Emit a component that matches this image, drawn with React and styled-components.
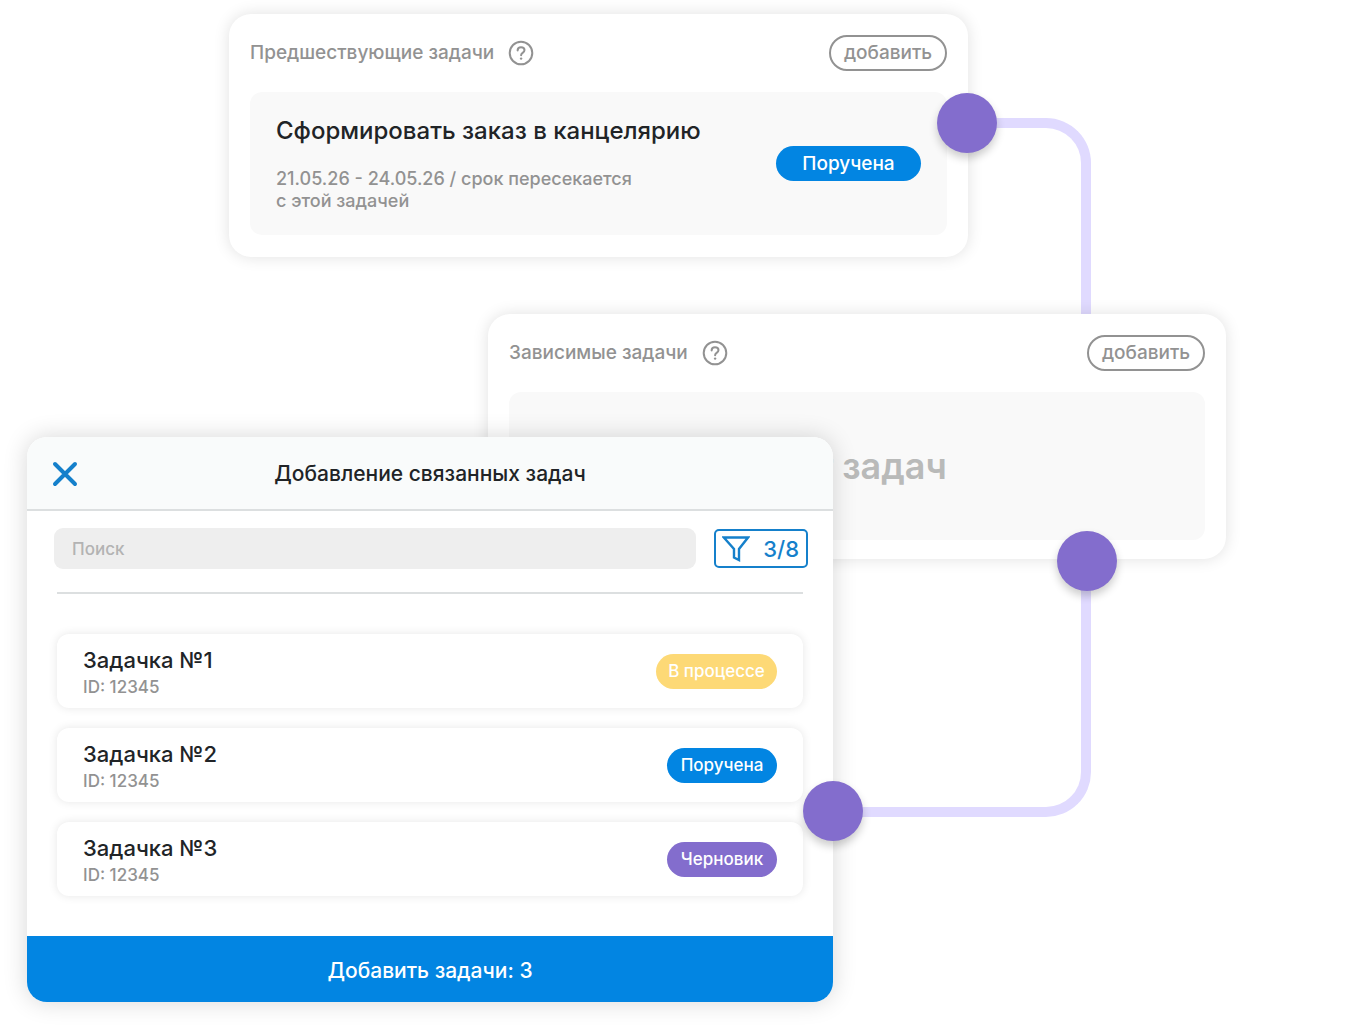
import React, {useState} from "react"
import styled, {createGlobalStyle} from "styled-components"

const colors = {
  blue: "#0285e2",
  outline: "#1580cb",
  purple: "#836dcd",
  lilac: "#e0daff",
  yellow: "#fdd976",
  text: "#212427",
  grey: "#929292",
  pale: "#f9f9f9",
  paleBlue: "#f9fbfb",
  line: "#dcdfe0",
}

const GlobalStyle = createGlobalStyle`
  body {
    margin: 0;
    background: #ffffff;
    font-family: Inter, "Noto Sans", sans-serif;
    font-weight: 500;
    color: ${colors.text};
  }
  * {
    box-sizing: border-box;
  }
  button, input {
    font: inherit;
  }
`

// columns and rows end where cards and connectors meet
const Board = styled.main`
  display: grid;
  grid-template-columns: 27fr 202fr 259fr 345fr 135fr 123fr 135fr 138fr;
  grid-template-rows: 14px minmax(243px, auto) 57px 123px 122px 258px 185px 28px;
`

const Card = styled.section`
  display: flex;
  flex-direction: column;
  gap: 22px;
  padding: 21px 21px 22px;
  border-radius: 22px;
  background: #ffffff;
  box-shadow: 0 0 16px rgba(0, 0, 0, 0.12);
  z-index: 1;
`

const PreviousCard = styled(Card)`
  grid-column: 3 / 6;
  grid-row: 2;
`

const DependentCard = styled(Card)`
  grid-column: 4 / 8;
  grid-row: 4 / 6;
  padding-bottom: 19px;
`

const Connector = styled.div`
  border: 10px solid ${colors.lilac};
  border-left: none;
`

const TopConnector = styled(Connector)`
  grid-column: 6;
  grid-row: 2 / 4;
  margin-top: 104px;
  border-bottom: none;
  border-top-right-radius: 45px;
`

const BottomConnector = styled(Connector)`
  grid-column: 5 / 7;
  grid-row: 6;
  border-top: none;
  border-bottom-right-radius: 45px;
`

const Node = styled.div`
  width: 60px;
  height: 60px;
  border-radius: 50%;
  background: ${colors.purple};
  box-shadow: 0 5px 8px rgba(0, 0, 0, 0.2);
  justify-self: end;
  z-index: 3;
`

const PreviousNode = styled(Node)`
  grid-column: 5;
  grid-row: 2;
  margin-top: 79px;
  margin-right: -29px;
`

const DependentNode = styled(Node)`
  grid-column: 6;
  grid-row: 5;
  align-self: end;
  margin-bottom: -32px;
  margin-right: -26px;
`

const DialogNode = styled(Node)`
  grid-column: 4;
  grid-row: 6;
  align-self: end;
  margin-bottom: -24px;
  margin-right: -30px;
`

const CardHeader = styled.header`
  display: flex;
  align-items: center;
  gap: 14px;
  height: 35px;
`

const CardLabel = styled.h2`
  margin: 0;
  font-size: 19px;
  line-height: 24px;
  font-weight: 500;
  color: ${colors.grey};
`

const HelpButton = styled.button`
  display: flex;
  padding: 0;
  border: none;
  background: none;
  color: ${colors.grey};
`

const AddButton = styled.button`
  width: 118px;
  height: 36px;
  margin-left: auto;
  padding: 0;
  border: 2px solid ${colors.grey};
  border-radius: 18px;
  background: transparent;
  color: ${colors.grey};
  font-size: 19px;
`

const Panel = styled.div`
  flex: 1;
  display: flex;
  align-items: center;
  justify-content: ${props => props.$center ? "center" : "space-between"};
  padding: 0 26px;
  border-radius: 12px;
  background: ${colors.pale};
`

const TaskInfo = styled.div`
  display: flex;
  flex-direction: column;
  gap: 22px;
`

const TaskTitle = styled.h3`
  margin: 0;
  font-size: 24px;
  line-height: 30px;
  font-weight: 500;
`

const TaskDates = styled.p`
  margin: 0;
  font-size: 18px;
  line-height: 22px;
  color: ${colors.grey};
`

const Empty = styled.p`
  margin: 0;
  font-size: 36px;
  line-height: 44px;
  font-weight: 600;
  color: #b9bab9;
`

const Badge = styled.span`
  display: flex;
  align-items: center;
  justify-content: center;
  width: ${props => props.$width};
  height: 35px;
  border-radius: 18px;
  background: ${props => props.$color};
  color: #ffffff;
  font-size: ${props => props.$large ? "19px" : "17px"};
`

const Dialog = styled.section`
  grid-column: 2 / 5;
  grid-row: 5 / 8;
  display: flex;
  flex-direction: column;
  border-radius: 20px;
  overflow: hidden;
  background: #ffffff;
  box-shadow: 0 0 24px rgba(0, 0, 0, 0.16);
  z-index: 2;
`

const DialogHeader = styled.header`
  display: grid;
  grid-template-columns: 26px 1fr 26px;
  align-items: center;
  height: 75px;
  padding: 2px 25px 0;
  border-bottom: 2px solid ${colors.line};
  background: ${colors.paleBlue};
`

const DialogTitle = styled.h2`
  margin: 0;
  text-align: center;
  font-size: 21px;
  line-height: 28px;
  font-weight: 500;
`

const CloseButton = styled.button`
  display: flex;
  padding: 0;
  border: none;
  background: none;
  color: ${colors.outline};
`

const SearchRow = styled.div`
  display: flex;
  align-items: center;
  gap: 18px;
  padding: 17px 25px 0 27px;
`

const SearchInput = styled.input`
  flex: 1;
  min-width: 0;
  height: 41px;
  padding: 0 18px;
  border: none;
  border-radius: 9px;
  background: #eeeeee;
  font-size: 17px;
  &::placeholder {
    color: #b3b3b3;
    opacity: 1;
  }
`

const FilterButton = styled.button`
  display: flex;
  align-items: center;
  justify-content: space-between;
  width: 94px;
  height: 39px;
  padding: 0 7px 0 6px;
  border: 2px solid ${colors.outline};
  border-radius: 5px;
  background: transparent;
  color: ${colors.outline};
  font-size: 22px;
`

const Divider = styled.hr`
  width: auto;
  height: 2px;
  margin: 23px 30px 0;
  border: none;
  background: ${colors.line};
`

const TaskList = styled.ul`
  display: flex;
  flex-direction: column;
  gap: 20px;
  margin: 0;
  padding: 40px 30px;
  list-style: none;
`

const TaskRow = styled.li`
  display: flex;
  align-items: center;
  justify-content: space-between;
  height: 74px;
  padding: 0 26px;
  border-radius: 12px;
  background: #ffffff;
  box-shadow: 0 0 10px rgba(0, 0, 0, 0.1);
`

const TaskText = styled.div`
  display: flex;
  flex-direction: column;
  gap: 1px;
  padding-top: 3px;
`

const TaskName = styled.div`
  font-size: 22px;
  line-height: 28px;
`

const TaskId = styled.div`
  font-size: 17px;
  line-height: 24px;
  color: ${colors.grey};
`

const SubmitButton = styled.button`
  height: 66px;
  margin-top: auto;
  padding: 2px 0 0;
  border: none;
  background: ${colors.blue};
  color: #ffffff;
  font-size: 21px;
`

const tasks = [
  {name: "Задачка №1", id: "12345", status: "В процессе", color: colors.yellow, width: "121px"},
  {name: "Задачка №2", id: "12345", status: "Поручена", color: colors.blue, width: "110px"},
  {name: "Задачка №3", id: "12345", status: "Черновик", color: colors.purple, width: "110px"},
]

const Header = ({label}) => (
  <CardHeader>
    <CardLabel>{label}</CardLabel>
    <HelpButton aria-label="Справка">
      <svg width="26" height="26" viewBox="0 0 26 26" fill="none" stroke="currentColor" strokeWidth="2" strokeLinecap="round">
        <circle cx="13" cy="13" r="11.3" />
        <path d="M9.6 10.4C9.7 8.3 11 7.2 13 7.2s3.5 1.2 3.5 2.9c0 1.5-.9 2.1-1.9 2.8-1 .7-1.5 1.2-1.5 2.4" />
        <circle cx="13.1" cy="18.6" r="1.2" fill="currentColor" stroke="none" />
      </svg>
    </HelpButton>
    <AddButton>добавить</AddButton>
  </CardHeader>
)

const App = () => {
  const [search, setSearch] = useState("")

  return (
    <>
      <GlobalStyle />
      <Board>
        <TopConnector />
        <BottomConnector />

        <PreviousCard>
          <Header label="Предшествующие задачи" />
          <Panel>
            <TaskInfo>
              <TaskTitle>Сформировать заказ в канцелярию</TaskTitle>
              <TaskDates>
                21.05.26 - 24.05.26 / срок пересекается<br />
                с этой задачей
              </TaskDates>
            </TaskInfo>
            <Badge $large $color={colors.blue} $width="145px">Поручена</Badge>
          </Panel>
        </PreviousCard>
        <PreviousNode />

        <DependentCard>
          <Header label="Зависимые задачи" />
          <Panel $center>
            <Empty>Нет задач</Empty>
          </Panel>
        </DependentCard>
        <DependentNode />

        <Dialog role="dialog" aria-labelledby="dialog-title">
          <DialogHeader>
            <CloseButton aria-label="Закрыть">
              <svg width="26" height="26" viewBox="0 0 26 26" stroke="currentColor" strokeWidth="4" strokeLinecap="round">
                <path d="M3 3L23 23M23 3L3 23" />
              </svg>
            </CloseButton>
            <DialogTitle id="dialog-title">Добавление связанных задач</DialogTitle>
          </DialogHeader>
          <SearchRow>
            <SearchInput
              aria-label="Поиск"
              placeholder="Поиск"
              value={search}
              onChange={event => setSearch(event.target.value)}
            />
            <FilterButton>
              <svg width="28" height="28" viewBox="0 0 28 28" fill="none" stroke="currentColor" strokeWidth="2.4">
                <path d="M1.8 2.5H26L17 14V25L12 22.6V14Z" />
              </svg>
              3/8
            </FilterButton>
          </SearchRow>
          <Divider />
          <TaskList>
            {tasks.map(task => (
              <TaskRow key={task.name}>
                <TaskText>
                  <TaskName>{task.name}</TaskName>
                  <TaskId>ID: {task.id}</TaskId>
                </TaskText>
                <Badge $color={task.color} $width={task.width}>{task.status}</Badge>
              </TaskRow>
            ))}
          </TaskList>
          <SubmitButton>Добавить задачи: 3</SubmitButton>
        </Dialog>
        <DialogNode />
      </Board>
    </>
  )
}

export default App
